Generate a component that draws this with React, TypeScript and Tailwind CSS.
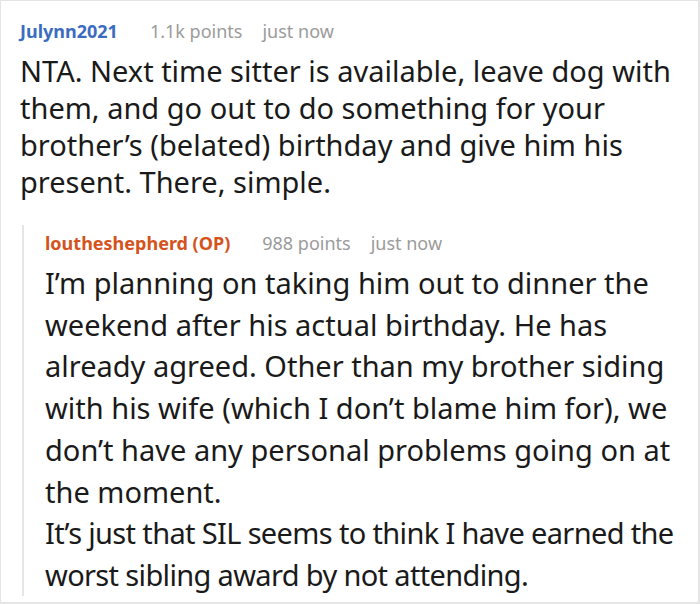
const meta = "text-[18px] leading-[24px] text-[#9b9b9b]";
const body = "text-[29px] text-[#1a1a1a]";

function CommentHeader({
  name,
  nameClass,
  points,
}: {
  name: string;
  nameClass: string;
  points: string;
}) {
  return (
    <div className="flex items-center">
      <span className={`text-[18px] font-bold leading-[24px] ${nameClass}`}>
        {name}
      </span>
      <span className={`ml-[32px] ${meta}`}>{points}</span>
      <span className={`ml-[20px] ${meta}`}>just now</span>
    </div>
  );
}

export default function App() {
  return (
    <div
      className="h-[604px] w-[700px] overflow-hidden border-t border-l border-r-2 border-b-2 border-[#e4e4e4] bg-white pl-[19px] pr-[12px] pt-[18px]"
      style={{ fontFamily: '"Noto Sans", "Open Sans", sans-serif' }}
    >
      {/* Top comment */}
      <CommentHeader
        name="Julynn2021"
        nameClass="text-[#3b6cbf]"
        points="1.1k points"
      />
      <p className={`mt-[9px] leading-[37px] ${body}`}>
        NTA. Next time sitter is available, leave dog with them, and go out to
        do something for your brother’s (belated) birthday and give him his
        present. There, simple.
      </p>

      {/* Reply */}
      <div className="ml-[2px] mt-[25px] flex">
        <div className="w-[2px] shrink-0 bg-[#e6e6e6]" />
        <div className="pl-[21px] pt-[6px]">
          <CommentHeader
            name="loutheshepherd (OP)"
            nameClass="text-[#d4531d]"
            points="988 points"
          />
          <p className={`mt-[7px] leading-[41.7px] ${body}`}>
            I’m planning on taking him out to dinner the weekend after his
            actual birthday. He has already agreed. Other than my brother siding
            with his wife (which I don’t blame him for), we don’t have any
            personal problems going on at the moment.
            <br />
            <span className="tracking-[-0.65px]">
              It’s just that SIL seems to think I have earned the worst sibling
              award by not attending.
            </span>
          </p>
        </div>
      </div>
    </div>
  );
}
